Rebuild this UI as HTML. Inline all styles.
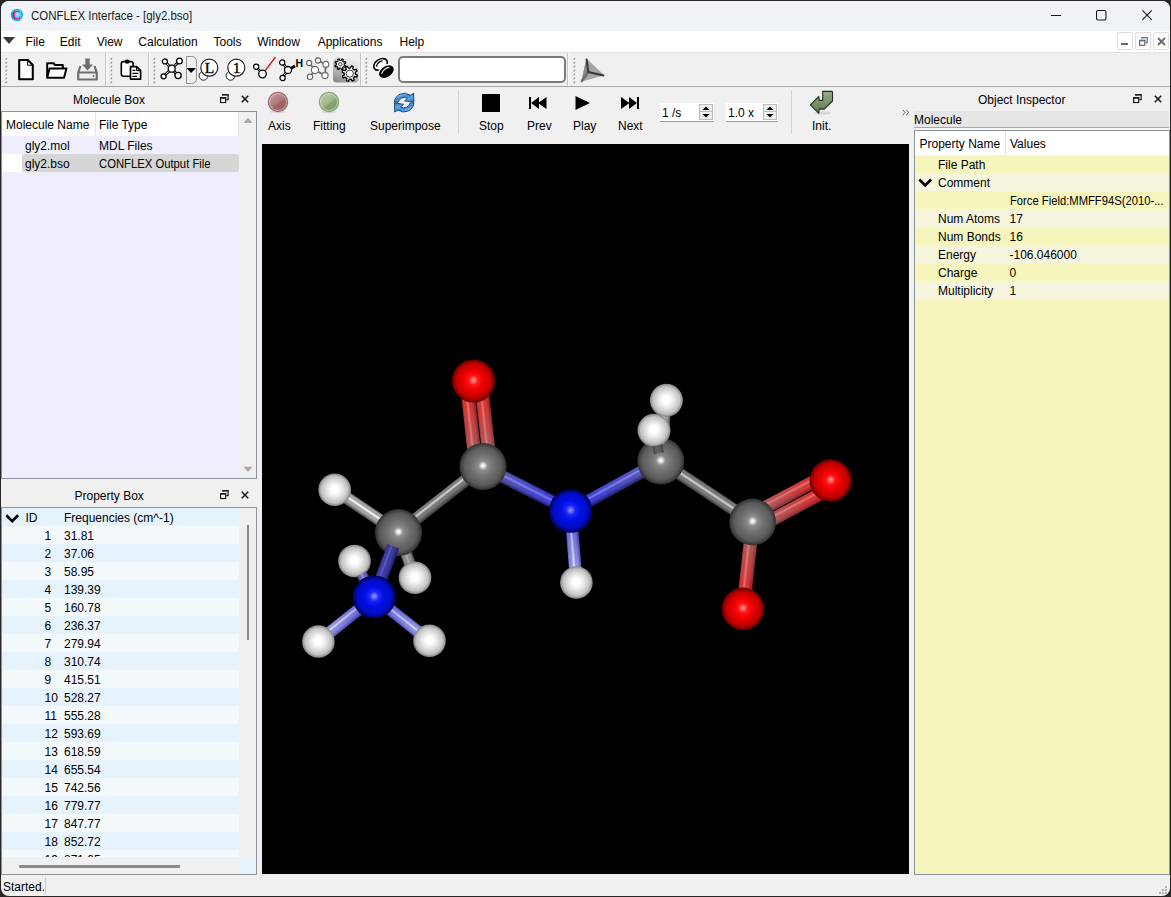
<!DOCTYPE html>
<html><head><meta charset="utf-8"><style>
*{margin:0;padding:0;box-sizing:border-box}
html,body{width:1171px;height:897px;overflow:hidden;background:#262626}
#w{position:absolute;left:0;top:0;width:1171px;height:897px;clip-path:inset(1px 1px 1px 1px round 8px);overflow:hidden}
body{font-family:"Liberation Sans",sans-serif;font-size:12px;color:#000;position:relative}
.a{position:absolute}
.t{position:absolute;line-height:14px;white-space:nowrap}
svg{position:absolute;overflow:visible}
</style></head><body><div id="w">
<div class="a" style="left:0px;top:0px;width:1171px;height:897px;background:#f0f0f0"></div>
<div class="a" style="left:0px;top:0px;width:1171px;height:31px;background:#eff2f7"></div>
<div class="a" style="left:0px;top:31px;width:1171px;height:21px;background:#ffffff"></div>
<div class="a" style="left:0px;top:52px;width:1171px;height:1px;background:#e3e3e3"></div>
<div class="a" style="left:0px;top:53px;width:1171px;height:33px;background:#f0f0f0"></div>
<div class="a" style="left:0px;top:86px;width:1171px;height:1px;background:#a9a9a9"></div>
<div class="t" style="left:31px;top:9.07px;font-size:12.2px;color:#1a1a1a;transform:scaleX(0.94);transform-origin:0 0">CONFLEX Interface - [gly2.bso]</div>
<svg style="left:9px;top:7px" width="16" height="16" viewBox="0 0 16 16">
<defs><radialGradient id="appg" cx="0.55" cy="0.45" r="0.6"><stop offset="0" stop-color="#b8f0ff"/><stop offset="0.6" stop-color="#28b8f0"/><stop offset="1" stop-color="#1090e0"/></radialGradient></defs>
<rect x="0.5" y="0.5" width="15" height="15" rx="3" fill="#fff"/>
<circle cx="8" cy="8" r="6.2" fill="url(#appg)"/>
<text x="7.6" y="12.2" text-anchor="middle" font-family="Liberation Serif" font-weight="bold" font-size="12" fill="#f0106a">C</text>
</svg>
<div class="a" style="left:1051px;top:15px;width:10px;height:1px;background:#1a1a1a"></div>
<svg style="left:1096px;top:10px" width="11" height="11"><rect x="0.55" y="0.55" width="9.4" height="9.4" rx="1.5" fill="none" stroke="#1a1a1a" stroke-width="1.1"/></svg>
<svg style="left:1142px;top:10px" width="11" height="11"><path d="M0.4 0.4 L9.8 9.8 M9.8 0.4 L0.4 9.8" stroke="#1a1a1a" stroke-width="1.1"/></svg>
<svg style="left:3px;top:37px" width="12" height="8"><path d="M0 0 H12 L6 7 Z" fill="#3a3a3a"/></svg>
<div class="t" style="left:25.6px;top:34.84px;font-size:12px;color:#000;">File</div>
<div class="t" style="left:59.8px;top:34.84px;font-size:12px;color:#000;">Edit</div>
<div class="t" style="left:96.7px;top:34.84px;font-size:12px;color:#000;">View</div>
<div class="t" style="left:138.3px;top:34.84px;font-size:12px;color:#000;">Calculation</div>
<div class="t" style="left:213.5px;top:34.84px;font-size:12px;color:#000;">Tools</div>
<div class="t" style="left:257.2px;top:34.84px;font-size:12px;color:#000;">Window</div>
<div class="t" style="left:317.7px;top:34.84px;font-size:12px;color:#000;">Applications</div>
<div class="t" style="left:399.5px;top:34.84px;font-size:12px;color:#000;">Help</div>
<div class="a" style="left:1117px;top:32px;width:16px;height:18px;border:1px solid #dedede;border-radius:2px;background:#fff"></div>
<div class="a" style="left:1135px;top:32px;width:16px;height:18px;border:1px solid #dedede;border-radius:2px;background:#fff"></div>
<div class="a" style="left:1153px;top:32px;width:16px;height:18px;border:1px solid #dedede;border-radius:2px;background:#fff"></div>
<div class="a" style="left:1121px;top:43px;width:7px;height:2px;background:#5c6b7a"></div>
<svg style="left:1139px;top:37px" width="9" height="9"><path d="M2.9 1.8 V0.6 H8.2 V5.6 H6.4" fill="none" stroke="#5c6b7a" stroke-width="1.2"/><rect x="0.6" y="3.4" width="5.2" height="4.9" fill="none" stroke="#5c6b7a" stroke-width="1.2"/><rect x="0" y="2.8" width="6.4" height="1.6" fill="#5c6b7a"/></svg>
<svg style="left:1157px;top:37px" width="9" height="9"><path d="M1 1 L8 8 M8 1 L1 8" stroke="#5c6b7a" stroke-width="1.8"/></svg>
<div class="t" style="left:73px;top:92.84px;font-size:12px;color:#000;">Molecule Box</div>
<div class="a" style="left:1px;top:111px;width:256px;height:368px;border:1px solid #8d939b;background:#efeefc"></div>
<div class="a" style="left:2px;top:112px;width:237px;height:24px;background:#ffffff"></div>
<div class="a" style="left:239px;top:112px;width:17px;height:366px;background:#f0f0f0"></div>
<div class="a" style="left:95px;top:112px;width:1px;height:24px;background:#e8e8e8"></div>
<div class="a" style="left:238px;top:112px;width:1px;height:24px;background:#e4e4e4"></div>
<div class="t" style="left:6px;top:117.84px;font-size:12px;color:#000;">Molecule Name</div>
<div class="t" style="left:99px;top:117.84px;font-size:12px;color:#000;">File Type</div>
<div class="a" style="left:2px;top:154px;width:20px;height:18px;background:#ffffff"></div>
<div class="a" style="left:22px;top:154px;width:217px;height:18px;background:#d6d6d6;border-radius:3px"></div>
<div class="t" style="left:25px;top:138.84px;font-size:12px;color:#000;">gly2.mol</div>
<div class="t" style="left:99px;top:138.84px;font-size:12px;color:#000;">MDL Files</div>
<div class="t" style="left:25px;top:156.84px;font-size:12px;color:#000;">gly2.bso</div>
<div class="t" style="left:99px;top:156.84px;font-size:12px;color:#000;transform:scaleX(0.94);transform-origin:0 0">CONFLEX Output File</div>
<div class="t" style="left:74.5px;top:488.84px;font-size:12px;color:#000;">Property Box</div>
<div class="a" style="left:1px;top:507px;width:256px;height:368px;border:1px solid #8d939b;background:#f0f0f0"></div>
<div class="a" style="left:2px;top:508px;width:237px;height:18px;background:#e5f3fc"></div>
<div class="a" style="left:2px;top:526px;width:237px;height:18px;background:#f4f9fc"></div>
<div class="a" style="left:2px;top:544px;width:237px;height:18px;background:#e6f3fc"></div>
<div class="a" style="left:2px;top:562px;width:237px;height:18px;background:#f4f9fc"></div>
<div class="a" style="left:2px;top:580px;width:237px;height:18px;background:#e6f3fc"></div>
<div class="a" style="left:2px;top:598px;width:237px;height:18px;background:#f4f9fc"></div>
<div class="a" style="left:2px;top:616px;width:237px;height:18px;background:#e6f3fc"></div>
<div class="a" style="left:2px;top:634px;width:237px;height:18px;background:#f4f9fc"></div>
<div class="a" style="left:2px;top:652px;width:237px;height:18px;background:#e6f3fc"></div>
<div class="a" style="left:2px;top:670px;width:237px;height:18px;background:#f4f9fc"></div>
<div class="a" style="left:2px;top:688px;width:237px;height:18px;background:#e6f3fc"></div>
<div class="a" style="left:2px;top:706px;width:237px;height:18px;background:#f4f9fc"></div>
<div class="a" style="left:2px;top:724px;width:237px;height:18px;background:#e6f3fc"></div>
<div class="a" style="left:2px;top:742px;width:237px;height:18px;background:#f4f9fc"></div>
<div class="a" style="left:2px;top:760px;width:237px;height:18px;background:#e6f3fc"></div>
<div class="a" style="left:2px;top:778px;width:237px;height:18px;background:#f4f9fc"></div>
<div class="a" style="left:2px;top:796px;width:237px;height:18px;background:#e6f3fc"></div>
<div class="a" style="left:2px;top:814px;width:237px;height:18px;background:#f4f9fc"></div>
<div class="a" style="left:2px;top:832px;width:237px;height:18px;background:#e6f3fc"></div>
<div class="a" style="left:2px;top:850px;width:237px;height:7px;background:#f4f9fc"></div>
<div class="t" style="left:25.5px;top:510.84px;font-size:12px;color:#000;">ID</div>
<div class="t" style="left:64px;top:510.84px;font-size:12px;color:#000;">Frequencies (cm^-1)</div>
<div class="a" style="left:0;top:525px;width:239px;height:332px;overflow:hidden">
<div class="t" style="left:44.5px;top:3.84px">1</div>
<div class="t" style="left:64px;top:3.84px">31.81</div>
<div class="t" style="left:44.5px;top:21.84px">2</div>
<div class="t" style="left:64px;top:21.84px">37.06</div>
<div class="t" style="left:44.5px;top:39.84px">3</div>
<div class="t" style="left:64px;top:39.84px">58.95</div>
<div class="t" style="left:44.5px;top:57.84px">4</div>
<div class="t" style="left:64px;top:57.84px">139.39</div>
<div class="t" style="left:44.5px;top:75.84px">5</div>
<div class="t" style="left:64px;top:75.84px">160.78</div>
<div class="t" style="left:44.5px;top:93.84px">6</div>
<div class="t" style="left:64px;top:93.84px">236.37</div>
<div class="t" style="left:44.5px;top:111.84px">7</div>
<div class="t" style="left:64px;top:111.84px">279.94</div>
<div class="t" style="left:44.5px;top:129.84px">8</div>
<div class="t" style="left:64px;top:129.84px">310.74</div>
<div class="t" style="left:44.5px;top:147.84px">9</div>
<div class="t" style="left:64px;top:147.84px">415.51</div>
<div class="t" style="left:44.5px;top:165.84px">10</div>
<div class="t" style="left:64px;top:165.84px">528.27</div>
<div class="t" style="left:44.5px;top:183.84px">11</div>
<div class="t" style="left:64px;top:183.84px">555.28</div>
<div class="t" style="left:44.5px;top:201.84px">12</div>
<div class="t" style="left:64px;top:201.84px">593.69</div>
<div class="t" style="left:44.5px;top:219.84px">13</div>
<div class="t" style="left:64px;top:219.84px">618.59</div>
<div class="t" style="left:44.5px;top:237.84px">14</div>
<div class="t" style="left:64px;top:237.84px">655.54</div>
<div class="t" style="left:44.5px;top:255.84px">15</div>
<div class="t" style="left:64px;top:255.84px">742.56</div>
<div class="t" style="left:44.5px;top:273.84px">16</div>
<div class="t" style="left:64px;top:273.84px">779.77</div>
<div class="t" style="left:44.5px;top:291.84px">17</div>
<div class="t" style="left:64px;top:291.84px">847.77</div>
<div class="t" style="left:44.5px;top:309.84px">18</div>
<div class="t" style="left:64px;top:309.84px">852.72</div>
<div class="t" style="left:44.5px;top:327.84px">19</div>
<div class="t" style="left:64px;top:327.84px">871.05</div>
</div>
<svg style="left:5px;top:514px" width="15" height="10"><path d="M1.3 1.3 L7.2 7.2 L13.1 1.3" fill="none" stroke="#000" stroke-width="2.7"/></svg>
<div class="a" style="left:247px;top:525px;width:2px;height:115px;background:#8a8a8a"></div>
<div class="a" style="left:2px;top:857px;width:237px;height:17px;background:#f0f0f0"></div>
<div class="a" style="left:239px;top:857px;width:17px;height:17px;background:#e6f3fc"></div>
<div class="a" style="left:19px;top:865px;width:161px;height:3px;background:#8a8a8a;border-radius:1px"></div>
<div class="a" style="left:262px;top:144px;width:647px;height:730px;background:#000"></div>
<svg style="left:262px;top:144px" width="647" height="730" viewBox="262 144 647 730"><defs><radialGradient id="ag_O" cx="0.5" cy="0.5" r="0.5" fx="0.5" fy="0.48"><stop offset="0" stop-color="#ffa0a0"/><stop offset="0.08" stop-color="#ff7070"/><stop offset="0.22" stop-color="#ff1414"/><stop offset="0.45" stop-color="#f00000"/><stop offset="0.8" stop-color="#c00000"/><stop offset="1" stop-color="#600000"/></radialGradient><radialGradient id="ag_C" cx="0.5" cy="0.5" r="0.5" fx="0.5" fy="0.48"><stop offset="0" stop-color="#ffffff"/><stop offset="0.07" stop-color="#e8e8e8"/><stop offset="0.2" stop-color="#8c8c8c"/><stop offset="0.45" stop-color="#727272"/><stop offset="0.8" stop-color="#5a5a5a"/><stop offset="1" stop-color="#303030"/></radialGradient><radialGradient id="ag_N" cx="0.5" cy="0.5" r="0.5" fx="0.5" fy="0.48"><stop offset="0" stop-color="#a0a0ff"/><stop offset="0.08" stop-color="#7070ff"/><stop offset="0.22" stop-color="#1828f8"/><stop offset="0.45" stop-color="#0010e8"/><stop offset="0.8" stop-color="#000cc0"/><stop offset="1" stop-color="#000050"/></radialGradient><radialGradient id="ag_H" cx="0.5" cy="0.5" r="0.5" fx="0.5" fy="0.48"><stop offset="0" stop-color="#ffffff"/><stop offset="0.22" stop-color="#ffffff"/><stop offset="0.5" stop-color="#e4e4e4"/><stop offset="0.82" stop-color="#c0c0c0"/><stop offset="1" stop-color="#808080"/></radialGradient></defs><linearGradient id="bg1" x1="0" y1="0" x2="0" y2="1"><stop offset="0" stop-color="#4a4a4a"/><stop offset="0.09" stop-color="#a4a4a4"/><stop offset="0.24" stop-color="#a4a4a4"/><stop offset="0.39" stop-color="#ffffff"/><stop offset="0.54" stop-color="#a4a4a4"/><stop offset="0.69" stop-color="#a4a4a4"/><stop offset="1" stop-color="#4a4a4a"/></linearGradient><g transform="translate(660.8 461.2) rotate(-84.75)"><rect x="0" y="-5.5" width="61.2" height="11" fill="url(#bg1)"/></g><linearGradient id="bg2" x1="0" y1="0" x2="0" y2="1"><stop offset="0" stop-color="#4a4a4a"/><stop offset="0.14" stop-color="#a4a4a4"/><stop offset="0.29" stop-color="#a4a4a4"/><stop offset="0.44" stop-color="#ffffff"/><stop offset="0.59" stop-color="#a4a4a4"/><stop offset="0.74" stop-color="#a4a4a4"/><stop offset="1" stop-color="#4a4a4a"/></linearGradient><g transform="translate(660.8 461.2) rotate(-102.41)"><rect x="0" y="-5.5" width="31.6" height="11" fill="url(#bg2)"/></g><circle cx="666.4" cy="400.3" r="16.5" fill="url(#ag_H)"/><linearGradient id="bg3" x1="0" y1="0" x2="0" y2="1"><stop offset="0" stop-color="#383838"/><stop offset="0.05" stop-color="#7a7a7a"/><stop offset="0.18" stop-color="#7a7a7a"/><stop offset="0.33" stop-color="#d8d8d8"/><stop offset="0.48" stop-color="#7a7a7a"/><stop offset="0.63" stop-color="#7a7a7a"/><stop offset="1" stop-color="#383838"/></linearGradient><g transform="translate(398.5 532.6) rotate(-38.03)"><rect x="0" y="-6.2" width="107.3" height="12.5" fill="url(#bg3)"/></g><linearGradient id="bg4" x1="0" y1="0" x2="0" y2="1"><stop offset="0" stop-color="#0c0c38"/><stop offset="0.12" stop-color="#4646c0"/><stop offset="0.27" stop-color="#4646c0"/><stop offset="0.42" stop-color="#8c8cff"/><stop offset="0.57" stop-color="#4646c0"/><stop offset="0.72" stop-color="#4646c0"/><stop offset="1" stop-color="#0c0c38"/></linearGradient><linearGradient id="bg5" x1="0" y1="0" x2="1" y2="0"><stop offset="0.15" stop-color="#909090" stop-opacity="0.25"/><stop offset="0.85" stop-color="#2020ff" stop-opacity="0.25"/></linearGradient><g transform="translate(483.0 466.5) rotate(26.93)"><rect x="0" y="-6.5" width="98.3" height="13" fill="url(#bg4)"/><rect x="0" y="-6.5" width="98.3" height="13" fill="url(#bg5)"/></g><linearGradient id="bg6" x1="0" y1="0" x2="0" y2="1"><stop offset="0" stop-color="#0c0c38"/><stop offset="0.05" stop-color="#4646c0"/><stop offset="0.18" stop-color="#4646c0"/><stop offset="0.33" stop-color="#8c8cff"/><stop offset="0.48" stop-color="#4646c0"/><stop offset="0.63" stop-color="#4646c0"/><stop offset="1" stop-color="#0c0c38"/></linearGradient><linearGradient id="bg7" x1="0" y1="0" x2="1" y2="0"><stop offset="0.15" stop-color="#2020ff" stop-opacity="0.25"/><stop offset="0.85" stop-color="#909090" stop-opacity="0.25"/></linearGradient><g transform="translate(570.6 511.0) rotate(-28.90)"><rect x="0" y="-6.5" width="103.0" height="13" fill="url(#bg6)"/><rect x="0" y="-6.5" width="103.0" height="13" fill="url(#bg7)"/></g><linearGradient id="bg8" x1="0" y1="0" x2="0" y2="1"><stop offset="0" stop-color="#383838"/><stop offset="0.13" stop-color="#7a7a7a"/><stop offset="0.28" stop-color="#7a7a7a"/><stop offset="0.43" stop-color="#d8d8d8"/><stop offset="0.58" stop-color="#7a7a7a"/><stop offset="0.73" stop-color="#7a7a7a"/><stop offset="1" stop-color="#383838"/></linearGradient><g transform="translate(660.8 461.2) rotate(33.52)"><rect x="0" y="-6.2" width="110.1" height="12.5" fill="url(#bg8)"/></g><linearGradient id="bg9" x1="0" y1="0" x2="0" y2="1"><stop offset="0" stop-color="#6a1818"/><stop offset="0.31" stop-color="#d03c3c"/><stop offset="0.46" stop-color="#d03c3c"/><stop offset="0.61" stop-color="#ff9090"/><stop offset="0.76" stop-color="#d03c3c"/><stop offset="0.91" stop-color="#d03c3c"/><stop offset="1" stop-color="#6a1818"/></linearGradient><linearGradient id="bg10" x1="0" y1="0" x2="1" y2="0"><stop offset="0.2" stop-color="#808080" stop-opacity="0.45"/><stop offset="1" stop-color="#ff0000" stop-opacity="0.3"/></linearGradient><g transform="translate(752.6 522.0) rotate(96.31)"><rect x="0" y="-6.8" width="87.3" height="13.5" fill="url(#bg9)"/><rect x="0" y="-6.8" width="87.3" height="13.5" fill="url(#bg10)"/></g><linearGradient id="bg11" x1="0" y1="0" x2="0" y2="1"><stop offset="0" stop-color="#6a1818"/><stop offset="0.05" stop-color="#d03c3c"/><stop offset="0.18" stop-color="#d03c3c"/><stop offset="0.33" stop-color="#ff9090"/><stop offset="0.48" stop-color="#d03c3c"/><stop offset="0.63" stop-color="#d03c3c"/><stop offset="1" stop-color="#6a1818"/></linearGradient><linearGradient id="bg12" x1="0" y1="0" x2="1" y2="0"><stop offset="0.2" stop-color="#808080" stop-opacity="0.45"/><stop offset="1" stop-color="#ff0000" stop-opacity="0.3"/></linearGradient><g transform="translate(752.6 522.0) rotate(-27.98)"><rect x="0" y="0.5" width="88.4" height="13" fill="url(#bg11)"/><rect x="0" y="0.5" width="88.4" height="13" fill="url(#bg12)"/></g><linearGradient id="bg13" x1="0" y1="0" x2="0" y2="1"><stop offset="0" stop-color="#6a1818"/><stop offset="0.05" stop-color="#d03c3c"/><stop offset="0.18" stop-color="#d03c3c"/><stop offset="0.33" stop-color="#ff9090"/><stop offset="0.48" stop-color="#d03c3c"/><stop offset="0.63" stop-color="#d03c3c"/><stop offset="1" stop-color="#6a1818"/></linearGradient><linearGradient id="bg14" x1="0" y1="0" x2="1" y2="0"><stop offset="0.2" stop-color="#808080" stop-opacity="0.45"/><stop offset="1" stop-color="#ff0000" stop-opacity="0.3"/></linearGradient><g transform="translate(752.6 522.0) rotate(-27.98)"><rect x="0" y="-13.5" width="88.4" height="13" fill="url(#bg13)"/><rect x="0" y="-13.5" width="88.4" height="13" fill="url(#bg14)"/></g><linearGradient id="bg15" x1="0" y1="0" x2="0" y2="1"><stop offset="0" stop-color="#6a1818"/><stop offset="0.12" stop-color="#d03c3c"/><stop offset="0.27" stop-color="#d03c3c"/><stop offset="0.42" stop-color="#ff9090"/><stop offset="0.57" stop-color="#d03c3c"/><stop offset="0.72" stop-color="#d03c3c"/><stop offset="1" stop-color="#6a1818"/></linearGradient><linearGradient id="bg16" x1="0" y1="0" x2="1" y2="0"><stop offset="0.2" stop-color="#808080" stop-opacity="0.45"/><stop offset="1" stop-color="#ff0000" stop-opacity="0.3"/></linearGradient><g transform="translate(483.0 466.5) rotate(-96.34)"><rect x="0" y="0.5" width="86.0" height="13.5" fill="url(#bg15)"/><rect x="0" y="0.5" width="86.0" height="13.5" fill="url(#bg16)"/></g><linearGradient id="bg17" x1="0" y1="0" x2="0" y2="1"><stop offset="0" stop-color="#6a1818"/><stop offset="0.12" stop-color="#d03c3c"/><stop offset="0.27" stop-color="#d03c3c"/><stop offset="0.42" stop-color="#ff9090"/><stop offset="0.57" stop-color="#d03c3c"/><stop offset="0.72" stop-color="#d03c3c"/><stop offset="1" stop-color="#6a1818"/></linearGradient><linearGradient id="bg18" x1="0" y1="0" x2="1" y2="0"><stop offset="0.2" stop-color="#808080" stop-opacity="0.45"/><stop offset="1" stop-color="#ff0000" stop-opacity="0.3"/></linearGradient><g transform="translate(483.0 466.5) rotate(-96.34)"><rect x="0" y="-13.9" width="86.0" height="13.5" fill="url(#bg17)"/><rect x="0" y="-13.9" width="86.0" height="13.5" fill="url(#bg18)"/></g><linearGradient id="bg19" x1="0" y1="0" x2="0" y2="1"><stop offset="0" stop-color="#3434a0"/><stop offset="0.28" stop-color="#8282dc"/><stop offset="0.43" stop-color="#8282dc"/><stop offset="0.58" stop-color="#f0f0ff"/><stop offset="0.73" stop-color="#8282dc"/><stop offset="0.88" stop-color="#8282dc"/><stop offset="1" stop-color="#3434a0"/></linearGradient><linearGradient id="bg20" x1="0" y1="0" x2="1" y2="0"><stop offset="0.2" stop-color="#2020c0" stop-opacity="0.3"/><stop offset="1" stop-color="#ffffff" stop-opacity="0.25"/></linearGradient><g transform="translate(570.6 511.0) rotate(85.36)"><rect x="0" y="-6.2" width="71.7" height="12.5" fill="url(#bg19)"/><rect x="0" y="-6.2" width="71.7" height="12.5" fill="url(#bg20)"/></g><linearGradient id="bg21" x1="0" y1="0" x2="0" y2="1"><stop offset="0" stop-color="#4a4a4a"/><stop offset="0.27" stop-color="#a4a4a4"/><stop offset="0.42" stop-color="#a4a4a4"/><stop offset="0.57" stop-color="#ffffff"/><stop offset="0.72" stop-color="#a4a4a4"/><stop offset="0.87" stop-color="#a4a4a4"/><stop offset="1" stop-color="#4a4a4a"/></linearGradient><g transform="translate(398.5 532.6) rotate(-146.14)"><rect x="0" y="-6.2" width="76.8" height="12.5" fill="url(#bg21)"/></g><linearGradient id="bg22" x1="0" y1="0" x2="0" y2="1"><stop offset="0" stop-color="#3a3a3a"/><stop offset="0.24" stop-color="#8a8a8a"/><stop offset="0.39" stop-color="#8a8a8a"/><stop offset="0.54" stop-color="#b4b4b4"/><stop offset="0.69" stop-color="#8a8a8a"/><stop offset="0.84" stop-color="#8a8a8a"/><stop offset="1" stop-color="#3a3a3a"/></linearGradient><g transform="translate(398.5 532.6) rotate(69.95)"><rect x="0" y="-6.0" width="48.1" height="12" fill="url(#bg22)"/></g><linearGradient id="bg23" x1="0" y1="0" x2="0" y2="1"><stop offset="0" stop-color="#3434a0"/><stop offset="0.37" stop-color="#8282dc"/><stop offset="0.52" stop-color="#8282dc"/><stop offset="0.67" stop-color="#f0f0ff"/><stop offset="0.82" stop-color="#8282dc"/><stop offset="0.95" stop-color="#8282dc"/><stop offset="1" stop-color="#3434a0"/></linearGradient><linearGradient id="bg24" x1="0" y1="0" x2="1" y2="0"><stop offset="0.2" stop-color="#2020c0" stop-opacity="0.3"/><stop offset="1" stop-color="#ffffff" stop-opacity="0.25"/></linearGradient><g transform="translate(374.2 597.0) rotate(141.43)"><rect x="0" y="-6.0" width="71.4" height="12" fill="url(#bg23)"/><rect x="0" y="-6.0" width="71.4" height="12" fill="url(#bg24)"/></g><linearGradient id="bg25" x1="0" y1="0" x2="0" y2="1"><stop offset="0" stop-color="#3434a0"/><stop offset="0.15" stop-color="#8282dc"/><stop offset="0.30" stop-color="#8282dc"/><stop offset="0.45" stop-color="#f0f0ff"/><stop offset="0.60" stop-color="#8282dc"/><stop offset="0.75" stop-color="#8282dc"/><stop offset="1" stop-color="#3434a0"/></linearGradient><linearGradient id="bg26" x1="0" y1="0" x2="1" y2="0"><stop offset="0.2" stop-color="#2020c0" stop-opacity="0.3"/><stop offset="1" stop-color="#ffffff" stop-opacity="0.25"/></linearGradient><g transform="translate(374.2 597.0) rotate(38.32)"><rect x="0" y="-6.0" width="70.5" height="12" fill="url(#bg25)"/><rect x="0" y="-6.0" width="70.5" height="12" fill="url(#bg26)"/></g><circle cx="473.5" cy="381" r="21.6" fill="url(#ag_O)"/><circle cx="483" cy="466.5" r="23.5" fill="url(#ag_C)"/><circle cx="334.7" cy="489.8" r="16.3" fill="url(#ag_H)"/><circle cx="660.8" cy="461.2" r="23.4" fill="url(#ag_C)"/><circle cx="654" cy="430.3" r="16.5" fill="url(#ag_H)"/><circle cx="752.6" cy="522" r="23.4" fill="url(#ag_C)"/><circle cx="830.7" cy="480.5" r="21.2" fill="url(#ag_O)"/><circle cx="743" cy="608.8" r="21.2" fill="url(#ag_O)"/><circle cx="570.6" cy="511" r="21.8" fill="url(#ag_N)"/><circle cx="576.4" cy="582.5" r="16.3" fill="url(#ag_H)"/><circle cx="415" cy="577.8" r="16.3" fill="url(#ag_H)"/><circle cx="398.5" cy="532.6" r="23.5" fill="url(#ag_C)"/><circle cx="354.5" cy="561" r="16.3" fill="url(#ag_H)"/><linearGradient id="bg27" x1="0" y1="0" x2="0" y2="1"><stop offset="0" stop-color="#20206a"/><stop offset="0.34" stop-color="#3a3aa0"/><stop offset="0.49" stop-color="#3a3aa0"/><stop offset="0.64" stop-color="#5a5ac0"/><stop offset="0.79" stop-color="#3a3aa0"/><stop offset="0.94" stop-color="#3a3aa0"/><stop offset="1" stop-color="#20206a"/></linearGradient><g transform="translate(393.4 546.2) rotate(110.67)"><rect x="0" y="-6.2" width="54.3" height="12.5" fill="url(#bg27)"/></g><linearGradient id="bg28" x1="0" y1="0" x2="0" y2="1"><stop offset="0" stop-color="#303080"/><stop offset="0.21" stop-color="#6a6ab0"/><stop offset="0.36" stop-color="#6a6ab0"/><stop offset="0.51" stop-color="#9a9ad0"/><stop offset="0.66" stop-color="#6a6ab0"/><stop offset="0.81" stop-color="#6a6ab0"/><stop offset="1" stop-color="#303080"/></linearGradient><g transform="translate(361.5 573.9) rotate(61.31)"><rect x="0" y="-5.5" width="26.4" height="11" fill="url(#bg28)"/></g><circle cx="374.2" cy="597" r="21.6" fill="url(#ag_N)"/><circle cx="318.4" cy="641.5" r="16.3" fill="url(#ag_H)"/><circle cx="429.5" cy="640.7" r="16.3" fill="url(#ag_H)"/><linearGradient id="bg29" x1="0" y1="0" x2="0" y2="1"><stop offset="0" stop-color="#3c3c3c"/><stop offset="0.26" stop-color="#585858"/><stop offset="0.41" stop-color="#585858"/><stop offset="0.56" stop-color="#646464"/><stop offset="0.71" stop-color="#585858"/><stop offset="0.86" stop-color="#585858"/><stop offset="1" stop-color="#3c3c3c"/></linearGradient><g transform="translate(657.3 445.4) rotate(77.59)"><rect x="0" y="-5.0" width="8.0" height="10" fill="url(#bg29)"/></g></svg>
<div class="t" style="left:978px;top:92.84px;font-size:12px;color:#000;">Object Inspector</div>
<div class="a" style="left:914px;top:111px;width:255px;height:16px;background:#e6e6e6"></div>
<div class="a" style="left:914px;top:127px;width:255px;height:1px;background:#a8a8a8"></div>
<div class="a" style="left:914px;top:128px;width:255px;height:2px;background:#f4f4f4"></div>
<div class="t" style="left:914px;top:112.84px;font-size:12px;color:#000;">Molecule</div>
<div class="a" style="left:914px;top:130px;width:256px;height:745px;border:1px solid #8d939b;background:#f6f5bb"></div>
<div class="a" style="left:915px;top:131px;width:254px;height:24px;background:#fff"></div>
<div class="a" style="left:1005px;top:131px;width:1px;height:24px;background:#e0e0e0"></div>
<div class="t" style="left:919.5px;top:136.84px;font-size:12px;color:#000;">Property Name</div>
<div class="t" style="left:1010px;top:136.84px;font-size:12px;color:#000;">Values</div>
<div class="a" style="left:915px;top:155px;width:254px;height:18px;background:#f6f5bb"></div>
<div class="a" style="left:915px;top:173px;width:254px;height:18px;background:#f4f5dc"></div>
<div class="a" style="left:915px;top:191px;width:254px;height:18px;background:#f6f5bb"></div>
<div class="a" style="left:915px;top:209px;width:254px;height:18px;background:#f4f5dc"></div>
<div class="a" style="left:915px;top:227px;width:254px;height:18px;background:#f6f5bb"></div>
<div class="a" style="left:915px;top:245px;width:254px;height:18px;background:#f4f5dc"></div>
<div class="a" style="left:915px;top:263px;width:254px;height:18px;background:#f6f5bb"></div>
<div class="a" style="left:915px;top:281px;width:254px;height:18px;background:#f4f5dc"></div>
<div class="a" style="left:915px;top:299px;width:254px;height:18px;background:#f6f5bb"></div>
<div class="t" style="left:938px;top:157.84px;font-size:12px;color:#000;">File Path</div>
<div class="t" style="left:938px;top:175.84px;font-size:12px;color:#000;">Comment</div>
<div class="t" style="left:1009.5px;top:193.84px;font-size:12px;color:#000;transform:scaleX(0.936);transform-origin:0 0">Force Field:MMFF94S(2010-...</div>
<div class="t" style="left:938px;top:211.84px;font-size:12px;color:#000;">Num Atoms</div>
<div class="t" style="left:1009.5px;top:211.84px;font-size:12px;color:#000;">17</div>
<div class="t" style="left:938px;top:229.84px;font-size:12px;color:#000;">Num Bonds</div>
<div class="t" style="left:1009.5px;top:229.84px;font-size:12px;color:#000;">16</div>
<div class="t" style="left:938px;top:247.84px;font-size:12px;color:#000;">Energy</div>
<div class="t" style="left:1009.5px;top:247.84px;font-size:12px;color:#000;">-106.046000</div>
<div class="t" style="left:938px;top:265.84px;font-size:12px;color:#000;">Charge</div>
<div class="t" style="left:1009.5px;top:265.84px;font-size:12px;color:#000;">0</div>
<div class="t" style="left:938px;top:283.84px;font-size:12px;color:#000;">Multiplicity</div>
<div class="t" style="left:1009.5px;top:283.84px;font-size:12px;color:#000;">1</div>
<svg style="left:918px;top:178px" width="15" height="10"><path d="M1.3 1.5 L7.2 7.4 L13.1 1.5" fill="none" stroke="#000" stroke-width="2.7"/></svg>
<svg style="left:220px;top:94px" width="9" height="10"><path d="M2.9 1.8 V0.5 H8.1 V5.7 H6.3" fill="none" stroke="#1a1a1a" stroke-width="1.2"/><rect x="2.5" y="0" width="6" height="1.6" fill="#1a1a1a"/><rect x="0.6" y="3.6" width="5" height="4.9" fill="#fff" stroke="#1a1a1a" stroke-width="1.2"/><rect x="0" y="3" width="6.2" height="1.7" fill="#1a1a1a"/></svg>
<svg style="left:241px;top:95px" width="8" height="8"><path d="M0.8 0.8 L7.2 7.2 M7.2 0.8 L0.8 7.2" stroke="#1a1a1a" stroke-width="1.6"/></svg>
<svg style="left:1133px;top:94px" width="9" height="10"><path d="M2.9 1.8 V0.5 H8.1 V5.7 H6.3" fill="none" stroke="#1a1a1a" stroke-width="1.2"/><rect x="2.5" y="0" width="6" height="1.6" fill="#1a1a1a"/><rect x="0.6" y="3.6" width="5" height="4.9" fill="#fff" stroke="#1a1a1a" stroke-width="1.2"/><rect x="0" y="3" width="6.2" height="1.7" fill="#1a1a1a"/></svg>
<svg style="left:1154px;top:95px" width="8" height="8"><path d="M0.8 0.8 L7.2 7.2 M7.2 0.8 L0.8 7.2" stroke="#1a1a1a" stroke-width="1.6"/></svg>
<svg style="left:220px;top:490px" width="9" height="10"><path d="M2.9 1.8 V0.5 H8.1 V5.7 H6.3" fill="none" stroke="#1a1a1a" stroke-width="1.2"/><rect x="2.5" y="0" width="6" height="1.6" fill="#1a1a1a"/><rect x="0.6" y="3.6" width="5" height="4.9" fill="#fff" stroke="#1a1a1a" stroke-width="1.2"/><rect x="0" y="3" width="6.2" height="1.7" fill="#1a1a1a"/></svg>
<svg style="left:241px;top:491px" width="8" height="8"><path d="M0.8 0.8 L7.2 7.2 M7.2 0.8 L0.8 7.2" stroke="#1a1a1a" stroke-width="1.6"/></svg>
<div class="t" style="left:3px;top:879.64px;font-size:12px;color:#000;">Started.</div>
<div class="a" style="left:45px;top:877px;width:1px;height:17px;background:#d0d0d0"></div>
<div class="t" style="left:268px;top:118.84px;font-size:12px;color:#000;">Axis</div>
<div class="t" style="left:313px;top:118.84px;font-size:12px;color:#000;">Fitting</div>
<div class="t" style="left:370px;top:118.84px;font-size:12px;color:#000;">Superimpose</div>
<div class="t" style="left:479px;top:118.84px;font-size:12px;color:#000;">Stop</div>
<div class="t" style="left:527px;top:118.84px;font-size:12px;color:#000;">Prev</div>
<div class="t" style="left:573px;top:118.84px;font-size:12px;color:#000;">Play</div>
<div class="t" style="left:618px;top:118.84px;font-size:12px;color:#000;">Next</div>
<div class="t" style="left:812px;top:118.84px;font-size:12px;color:#000;">Init.</div>
<div class="a" style="left:458px;top:90px;width:1px;height:44px;background:#d4d4d4"></div>
<div class="a" style="left:791px;top:90px;width:1px;height:44px;background:#d4d4d4"></div>
<div class="a" style="left:482px;top:94px;width:18px;height:18px;background:#000"></div>
<svg style="left:529px;top:97px" width="19" height="13"><path d="M0 0H2V12H0Z M2 6 L10 0 V12Z M9 6 L17.5 0 V12Z" fill="#000"/></svg>
<svg style="left:575px;top:96px" width="16" height="15"><path d="M0.5 0 L15 7 L0.5 14Z" fill="#000"/></svg>
<svg style="left:620px;top:97px" width="19" height="13"><path d="M17 0H19V12H17Z M17 6 L9 0 V12Z M9.5 6 L1 0 V12Z" fill="#000"/></svg>
<div class="a" style="left:660px;top:103px;width:54px;height:19px;background:#fff;border-bottom:1px solid #9a9a9a"></div>
<div class="a" style="left:699px;top:104px;width:14px;height:16px;border:1px solid #bdbdbd;background:#f0f0f0"></div>
<div class="a" style="left:699px;top:111px;width:14px;height:1px;background:#bdbdbd"></div>
<svg style="left:702px;top:106px" width="8" height="12"><path d="M0.5 4 L4 0.5 L7.5 4Z M0.5 8 L4 11.5 L7.5 8Z" fill="#000"/></svg>
<div class="t" style="left:662px;top:105.84px;font-size:12px;color:#000;">1 /s</div>
<div class="a" style="left:726px;top:103px;width:52px;height:19px;background:#fff;border-bottom:1px solid #9a9a9a"></div>
<div class="a" style="left:763px;top:104px;width:14px;height:16px;border:1px solid #bdbdbd;background:#f0f0f0"></div>
<div class="a" style="left:763px;top:111px;width:14px;height:1px;background:#bdbdbd"></div>
<svg style="left:766px;top:106px" width="8" height="12"><path d="M0.5 4 L4 0.5 L7.5 4Z M0.5 8 L4 11.5 L7.5 8Z" fill="#000"/></svg>
<div class="t" style="left:728px;top:105.84px;font-size:12px;color:#000;">1.0 x</div>
<svg style="left:902px;top:109px" width="8" height="7"><path d="M0.8 0.8 L3 3.5 L0.8 6.2 M4.3 0.8 L6.5 3.5 L4.3 6.2" fill="none" stroke="#555" stroke-width="0.9"/></svg>
<svg style="left:5px;top:57px" width="4" height="28"><path d="M0.6 2.60 L2 1.20" stroke="#8a8a8a" stroke-width="1.2"/><path d="M0.6 6.50 L2 5.10" stroke="#8a8a8a" stroke-width="1.2"/><path d="M0.6 10.40 L2 9.00" stroke="#8a8a8a" stroke-width="1.2"/><path d="M0.6 14.30 L2 12.90" stroke="#8a8a8a" stroke-width="1.2"/><path d="M0.6 18.20 L2 16.80" stroke="#8a8a8a" stroke-width="1.2"/><path d="M0.6 22.10 L2 20.70" stroke="#8a8a8a" stroke-width="1.2"/><path d="M0.6 26.00 L2 24.60" stroke="#8a8a8a" stroke-width="1.2"/></svg>
<svg style="left:110px;top:57px" width="4" height="28"><path d="M0.6 2.60 L2 1.20" stroke="#8a8a8a" stroke-width="1.2"/><path d="M0.6 6.50 L2 5.10" stroke="#8a8a8a" stroke-width="1.2"/><path d="M0.6 10.40 L2 9.00" stroke="#8a8a8a" stroke-width="1.2"/><path d="M0.6 14.30 L2 12.90" stroke="#8a8a8a" stroke-width="1.2"/><path d="M0.6 18.20 L2 16.80" stroke="#8a8a8a" stroke-width="1.2"/><path d="M0.6 22.10 L2 20.70" stroke="#8a8a8a" stroke-width="1.2"/><path d="M0.6 26.00 L2 24.60" stroke="#8a8a8a" stroke-width="1.2"/></svg>
<svg style="left:153px;top:57px" width="4" height="28"><path d="M0.6 2.60 L2 1.20" stroke="#8a8a8a" stroke-width="1.2"/><path d="M0.6 6.50 L2 5.10" stroke="#8a8a8a" stroke-width="1.2"/><path d="M0.6 10.40 L2 9.00" stroke="#8a8a8a" stroke-width="1.2"/><path d="M0.6 14.30 L2 12.90" stroke="#8a8a8a" stroke-width="1.2"/><path d="M0.6 18.20 L2 16.80" stroke="#8a8a8a" stroke-width="1.2"/><path d="M0.6 22.10 L2 20.70" stroke="#8a8a8a" stroke-width="1.2"/><path d="M0.6 26.00 L2 24.60" stroke="#8a8a8a" stroke-width="1.2"/></svg>
<svg style="left:365px;top:57px" width="4" height="28"><path d="M0.6 2.60 L2 1.20" stroke="#8a8a8a" stroke-width="1.2"/><path d="M0.6 6.50 L2 5.10" stroke="#8a8a8a" stroke-width="1.2"/><path d="M0.6 10.40 L2 9.00" stroke="#8a8a8a" stroke-width="1.2"/><path d="M0.6 14.30 L2 12.90" stroke="#8a8a8a" stroke-width="1.2"/><path d="M0.6 18.20 L2 16.80" stroke="#8a8a8a" stroke-width="1.2"/><path d="M0.6 22.10 L2 20.70" stroke="#8a8a8a" stroke-width="1.2"/><path d="M0.6 26.00 L2 24.60" stroke="#8a8a8a" stroke-width="1.2"/></svg>
<svg style="left:573px;top:57px" width="4" height="28"><path d="M0.6 2.60 L2 1.20" stroke="#8a8a8a" stroke-width="1.2"/><path d="M0.6 6.50 L2 5.10" stroke="#8a8a8a" stroke-width="1.2"/><path d="M0.6 10.40 L2 9.00" stroke="#8a8a8a" stroke-width="1.2"/><path d="M0.6 14.30 L2 12.90" stroke="#8a8a8a" stroke-width="1.2"/><path d="M0.6 18.20 L2 16.80" stroke="#8a8a8a" stroke-width="1.2"/><path d="M0.6 22.10 L2 20.70" stroke="#8a8a8a" stroke-width="1.2"/><path d="M0.6 26.00 L2 24.60" stroke="#8a8a8a" stroke-width="1.2"/></svg>
<div class="a" style="left:105px;top:53px;width:1px;height:33px;background:#c4c4c4"></div>
<div class="a" style="left:106px;top:53px;width:1px;height:33px;background:#fbfbfb"></div>
<div class="a" style="left:148px;top:53px;width:1px;height:33px;background:#c4c4c4"></div>
<div class="a" style="left:149px;top:53px;width:1px;height:33px;background:#fbfbfb"></div>
<div class="a" style="left:360px;top:53px;width:1px;height:33px;background:#c4c4c4"></div>
<div class="a" style="left:361px;top:53px;width:1px;height:33px;background:#fbfbfb"></div>
<div class="a" style="left:567px;top:53px;width:1px;height:33px;background:#c4c4c4"></div>
<div class="a" style="left:568px;top:53px;width:1px;height:33px;background:#fbfbfb"></div>
<svg style="left:18px;top:58px" width="16" height="23" viewBox="0 0 16 23"><path d="M1.2 2 H9.8 L14.8 7 V21.3 H1.2 Z" fill="#fff" stroke="#000" stroke-width="2.1" stroke-linejoin="round"/><path d="M9.6 2.2 V7.2 H14.6" fill="none" stroke="#000" stroke-width="1"/></svg>
<svg style="left:46px;top:62px" width="22" height="18" viewBox="0 0 22 18"><path d="M1.2 15.8 V1.2 H7.5 L9 3 H16.8 V6" fill="#fff" stroke="#000" stroke-width="2" stroke-linejoin="round"/><path d="M1.2 15.8 L3.5 6.5 H20.5 L18 15.8 Z" fill="#fff" stroke="#000" stroke-width="2" stroke-linejoin="round"/></svg>
<svg style="left:77px;top:58px" width="21" height="23" viewBox="0 0 21 23"><path d="M3.5 8 L1.2 14.5 V21.5 H19.8 V14.5 L17.5 8" fill="none" stroke="#6e6e6e" stroke-width="2.2" stroke-linejoin="round"/><path d="M1.2 14.5 H19.8" stroke="#6e6e6e" stroke-width="2.2"/><path d="M8.3 0.5 H12.7 V6.5 H16 L10.5 12.5 L5 6.5 H8.3 Z" fill="#6e6e6e"/><circle cx="16.5" cy="18" r="1" fill="#6e6e6e"/></svg>
<svg style="left:120px;top:59px" width="23" height="22" viewBox="0 0 23 22"><rect x="1.3" y="2.6" width="11.8" height="14.6" rx="2.2" fill="#fff" stroke="#000" stroke-width="1.6"/><ellipse cx="7.2" cy="2.7" rx="2.5" ry="2.1" fill="#000"/><path d="M10.5 7.7 H16.7 L20.6 11.6 V20.1 H10.5 Z" fill="#fff" stroke="#000" stroke-width="1.7" stroke-linejoin="round"/><path d="M16.6 7.9 V10.8 Q16.6 11.7 17.5 11.7 H20.4" fill="none" stroke="#000" stroke-width="1.3"/><path d="M12.4 11.4 H15.4 M12.4 14.4 H18.4 M12.4 17.4 H17" stroke="#000" stroke-width="1.1"/></svg>
<svg style="left:160px;top:57px" width="40" height="27" viewBox="0 0 40 27"><g fill="none"><path d="M4.9 4.4 L11.7 11.7 L19.4 4 M11.7 11.7 L3.6 19.3 M11.7 11.7 L18.1 18.5" stroke="#000" stroke-width="2.8"/><path d="M4.9 4.4 L11.7 11.7 L19.4 4 M11.7 11.7 L3.6 19.3 M11.7 11.7 L18.1 18.5" stroke="#fff" stroke-width="1"/></g><circle cx="4.9" cy="4.4" r="2.5" fill="#fff" stroke="#000" stroke-width="1.3"/><circle cx="19.4" cy="4" r="2.9" fill="#fff" stroke="#000" stroke-width="1.3"/><circle cx="3.6" cy="19.3" r="2.5" fill="#fff" stroke="#000" stroke-width="1.3"/><circle cx="18.1" cy="18.5" r="3.1" fill="#fff" stroke="#000" stroke-width="1.3"/><circle cx="11.7" cy="11.7" r="3.5" fill="#fff" stroke="#000" stroke-width="1.3"/><path d="M26.5 -0.5 H31.5 Q36.5 -0.5 36.5 5 V21 Q36.5 26.5 31.5 26.5 H26.5 Z" fill="none" stroke="#777" stroke-width="0.8"/><rect x="26.6" y="10" width="9.8" height="1" fill="#fff"/><path d="M26.5 11 H36 L31 16 H31 Z" fill="#000"/></svg>
<svg style="left:196.8px;top:56px" width="24" height="28" viewBox="0 0 24 28"><circle cx="6.5" cy="19.8" r="4.4" fill="#fff" stroke="#222" stroke-width="1"/><circle cx="12.3" cy="11.7" r="8.5" fill="#fff" stroke="#222" stroke-width="1.2"/><text x="12.5" y="17" text-anchor="middle" font-family="Liberation Serif" font-size="15.5" fill="#000" stroke="#000" stroke-width="0.35">L</text></svg>
<svg style="left:224.1px;top:56px" width="24" height="28" viewBox="0 0 24 28"><circle cx="6.5" cy="19.8" r="4.4" fill="#fff" stroke="#222" stroke-width="1"/><circle cx="12.3" cy="11.7" r="8.5" fill="#fff" stroke="#222" stroke-width="1.2"/><text x="12.5" y="17" text-anchor="middle" font-family="Liberation Serif" font-size="15.5" fill="#000" stroke="#000" stroke-width="0.35">1</text></svg>
<svg style="left:250px;top:55px" width="28" height="27" viewBox="0 0 28 27"><path d="M6.2 11.7 L12.5 19" stroke="#000" stroke-width="2.4"/><path d="M6.2 11.7 L12.5 19" stroke="#fff" stroke-width="0.7"/><path d="M15 16 L25.5 2" stroke="#e01010" stroke-width="1.3"/><circle cx="6.2" cy="11.7" r="2.6" fill="#fff" stroke="#000" stroke-width="1.2"/><circle cx="12.5" cy="19" r="3.8" fill="#fff" stroke="#000" stroke-width="1.3"/></svg>
<svg style="left:277px;top:57px" width="28" height="26" viewBox="0 0 28 26"><path d="M5 5 L11 13 L5 21 M11 13 L18 9" fill="none" stroke="#000" stroke-width="2.8"/><path d="M5 5 L11 13 L5 21" fill="none" stroke="#fff" stroke-width="1"/><circle cx="5.2" cy="5.5" r="2.6" fill="#fff" stroke="#000" stroke-width="1.2"/><circle cx="11" cy="13" r="3.5" fill="#fff" stroke="#000" stroke-width="1.3"/><circle cx="5.6" cy="21" r="2.6" fill="#fff" stroke="#000" stroke-width="1.2"/><text x="18.5" y="9.6" font-family="Liberation Sans" font-weight="bold" font-size="10.5" fill="#000">H</text></svg>
<svg style="left:305px;top:56px" width="26" height="27" viewBox="0 0 26 27"><g stroke="#6a6a6a" fill="#fff"><path d="M4.2 7 L10 14 L5 20.8 M10 14 L20 19.5 L20.8 8.4 L13 4.5" stroke-width="1.8" fill="none"/><circle cx="4.2" cy="7" r="2.6" stroke-width="1.1"/><circle cx="10" cy="14" r="3.6" stroke-width="1.1"/><circle cx="5" cy="20.8" r="2.7" stroke-width="1.1"/><circle cx="13" cy="4.5" r="2.6" stroke-width="1.1"/><circle cx="20.8" cy="8.4" r="3" stroke-width="1.1"/><circle cx="20" cy="19.5" r="3.1" stroke-width="1.1"/></g></svg>
<svg style="left:333px;top:57px" width="26" height="26" viewBox="0 0 26 26"><defs><linearGradient id="gbg" x1="0.7" y1="0" x2="0.3" y2="1"><stop offset="0" stop-color="#f0f0f0"/><stop offset="0.35" stop-color="#d8d8d8"/><stop offset="1" stop-color="#8c8c8c"/></linearGradient></defs><rect x="0" y="0.5" width="25.5" height="25" rx="3.5" fill="url(#gbg)"/><polygon points="11.22,8.09 12.66,8.92 12.06,10.24 10.49,9.71 9.51,10.63 9.94,12.24 8.59,12.75 7.85,11.26 6.51,11.22 5.68,12.66 4.36,12.06 4.89,10.49 3.97,9.51 2.36,9.94 1.85,8.59 3.34,7.85 3.38,6.51 1.94,5.68 2.54,4.36 4.11,4.89 5.09,3.97 4.66,2.36 6.01,1.85 6.75,3.34 8.09,3.38 8.92,1.94 10.24,2.54 9.71,4.11 10.63,5.09 12.24,4.66 12.75,6.01 11.26,6.75" fill="#fff" stroke="#000" stroke-width="1.2" stroke-linejoin="round"/><circle cx="7.3" cy="7.3" r="1.7" fill="#fff" stroke="#000" stroke-width="0.8"/><polygon points="22.37,17.16 24.45,18.11 23.81,20.02 21.58,19.52 20.34,20.94 21.15,23.08 19.34,23.97 18.12,22.04 16.24,22.17 15.29,24.25 13.38,23.61 13.88,21.38 12.46,20.14 10.32,20.95 9.43,19.14 11.36,17.92 11.23,16.04 9.15,15.09 9.79,13.18 12.02,13.68 13.26,12.26 12.45,10.12 14.26,9.23 15.48,11.16 17.36,11.03 18.31,8.95 20.22,9.59 19.72,11.82 21.14,13.06 23.28,12.25 24.17,14.06 22.24,15.28" fill="#fff" stroke="#000" stroke-width="1.3" stroke-linejoin="round"/><circle cx="16.8" cy="16.6" r="3.6" fill="#fff" stroke="#000" stroke-width="0.8"/></svg>
<svg style="left:371px;top:57px" width="26" height="24" viewBox="0 0 26 24"><ellipse cx="9.6" cy="7.4" rx="7.4" ry="5.1" transform="rotate(-33 9.6 7.4)" fill="#fff" stroke="#000" stroke-width="1.7"/><path d="M5.6 9.2 Q6.4 5 11.2 3.9" fill="none" stroke="#000" stroke-width="1.3" stroke-linecap="round"/><ellipse cx="15.4" cy="14.6" rx="8.9" ry="6.1" transform="rotate(-35 15.4 14.6)" fill="#000" stroke="#fff" stroke-width="1.4"/><path d="M10.8 16.4 Q12.5 11.5 18 10.4" fill="none" stroke="#e8e8e8" stroke-width="1.1" stroke-linecap="round"/></svg>
<div class="a" style="left:398px;top:56px;width:168px;height:27px;background:#fff;border:2px solid #7a7a7a;border-radius:5px"></div>
<svg style="left:580px;top:57px" width="26" height="26" viewBox="0 0 26 26"><path d="M6.4 1.5 L24.2 18.2 L1.3 24.7 Z" fill="#a4a4a4"/><path d="M6.4 1.5 L8.5 15 L1.3 24.7 Z" fill="#8a8a8a"/><path d="M8.3 15 L1.8 24" fill="none" stroke="#6a6a6a" stroke-width="2.2" stroke-linecap="round"/><path d="M6.6 2.5 L8.3 15 L23.5 18.4" fill="none" stroke="#363636" stroke-width="2" stroke-linecap="round" stroke-linejoin="round"/></svg>
<svg style="left:267px;top:91.2px" width="22" height="23" viewBox="0 0 22 23"><defs><linearGradient id="axg" x1="0.2" y1="0.1" x2="0.8" y2="0.9"><stop offset="0" stop-color="#c49898"/><stop offset="0.55" stop-color="#ab7474"/><stop offset="0.6" stop-color="#9c6464"/><stop offset="1" stop-color="#9c6464"/></linearGradient></defs><ellipse cx="11" cy="21" rx="8" ry="1.5" fill="#000" opacity="0.08"/><circle cx="11" cy="11" r="9.6" fill="url(#axg)" stroke="#9c6464" stroke-width="1.2"/><circle cx="11" cy="11" r="8.5" fill="none" stroke="#fff" stroke-opacity="0.55" stroke-width="0.8"/></svg>
<svg style="left:318px;top:91.2px" width="22" height="23" viewBox="0 0 22 23"><defs><linearGradient id="fig" x1="0.2" y1="0.1" x2="0.8" y2="0.9"><stop offset="0" stop-color="#b8cca8"/><stop offset="0.55" stop-color="#9db488"/><stop offset="0.6" stop-color="#86a070"/><stop offset="1" stop-color="#86a070"/></linearGradient></defs><ellipse cx="11" cy="21" rx="8" ry="1.5" fill="#000" opacity="0.08"/><circle cx="11" cy="11" r="9.6" fill="url(#fig)" stroke="#86a070" stroke-width="1.2"/><circle cx="11" cy="11" r="8.5" fill="none" stroke="#fff" stroke-opacity="0.55" stroke-width="0.8"/></svg>
<svg style="left:394px;top:92px" width="21" height="22" viewBox="0 0 21 22"><defs><linearGradient id="sup" x1="0.1" y1="0" x2="0.9" y2="1"><stop offset="0" stop-color="#a4d4f6"/><stop offset="0.45" stop-color="#3c8ad8"/><stop offset="0.7" stop-color="#5aa6e8"/><stop offset="1" stop-color="#2f78c4"/></linearGradient></defs><g fill="url(#sup)" stroke="#163f70" stroke-width="0.9" stroke-linejoin="round"><path d="M0.4 10.3 A9.9 9.9 0 0 1 16.3 3.3 L19.6 1.2 L19.9 10.2 L10.6 8.9 L13.6 6.4 A6.3 6.3 0 0 0 4.1 10.3 Z"/><path d="M0.4 10.3 A9.9 9.9 0 0 1 16.3 3.3 L19.6 1.2 L19.9 10.2 L10.6 8.9 L13.6 6.4 A6.3 6.3 0 0 0 4.1 10.3 Z" transform="rotate(180 10.15 10.6)"/></g></svg>
<svg style="left:809px;top:90px" width="26" height="26" viewBox="0 0 26 26"><defs><linearGradient id="ini" x1="0" y1="0" x2="0" y2="1"><stop offset="0" stop-color="#98ab86"/><stop offset="1" stop-color="#60784f"/></linearGradient></defs><ellipse cx="14" cy="23" rx="8" ry="1.8" fill="#000" opacity="0.1"/><path d="M13.7 1.4 H22.8 Q23.5 1.4 23.5 2.2 V11 L15.2 19.1 H10.2 L9.8 23.3 L1.4 14.8 L9.8 6.4 L10.2 10.4 H13.7 Z" fill="url(#ini)" stroke="#252a20" stroke-width="1.1" stroke-linejoin="round"/></svg>
<svg style="left:243px;top:117px" width="10" height="7"><path d="M0.5 6 L5 0.8 L9.5 6Z" fill="#a8a8a8"/></svg>
<svg style="left:243px;top:466px" width="10" height="7"><path d="M0.5 0.8 L5 6 L9.5 0.8Z" fill="#a8a8a8"/></svg>
<div class="a" style="left:1165px;top:886px;width:2px;height:2px;background:#b0b0b0"></div>
<div class="a" style="left:1162px;top:889px;width:2px;height:2px;background:#b0b0b0"></div>
<div class="a" style="left:1165px;top:889px;width:2px;height:2px;background:#b0b0b0"></div>
<div class="a" style="left:1159px;top:892px;width:2px;height:2px;background:#b0b0b0"></div>
<div class="a" style="left:1162px;top:892px;width:2px;height:2px;background:#b0b0b0"></div>
<div class="a" style="left:1165px;top:892px;width:2px;height:2px;background:#b0b0b0"></div>
</div></body></html>
